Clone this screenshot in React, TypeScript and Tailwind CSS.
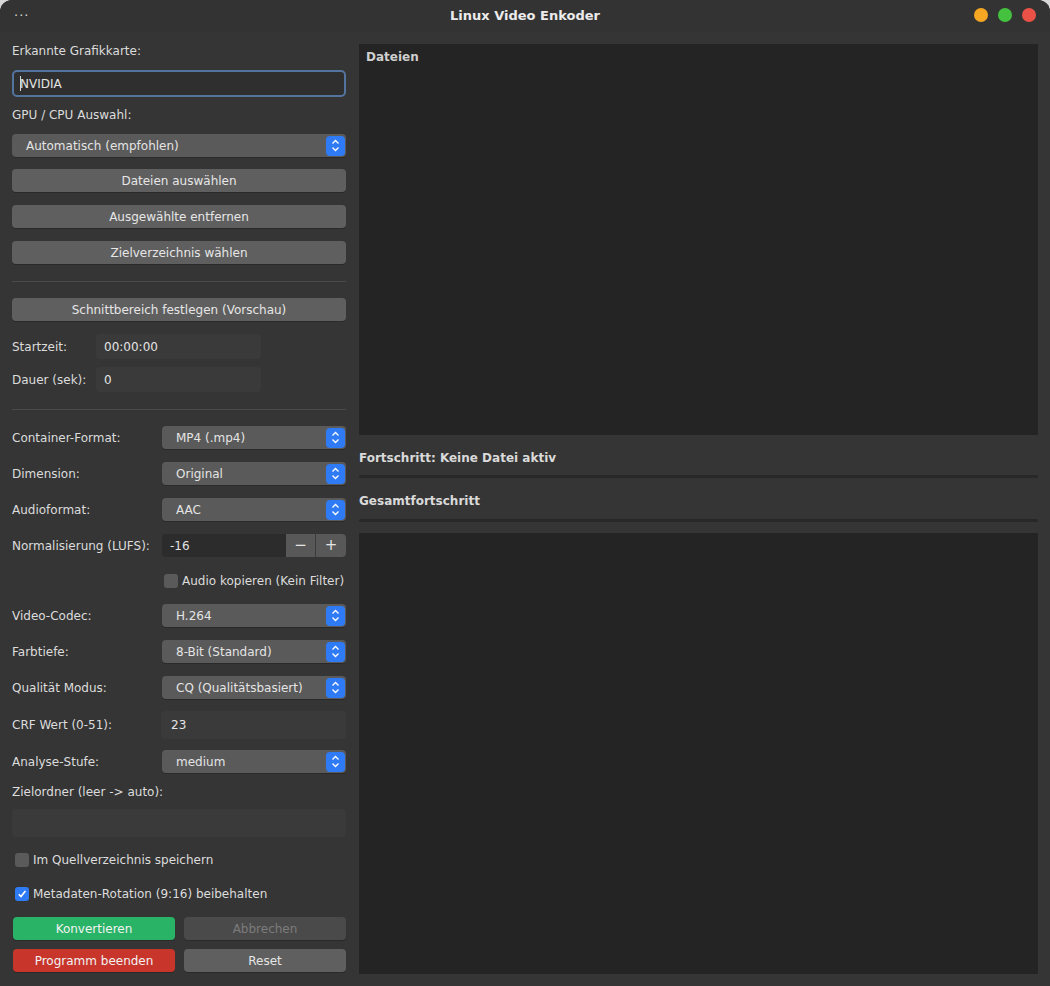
import type { ReactNode } from "react";

const font = { fontFamily: '"DejaVu Sans", "Liberation Sans", sans-serif' };

function Stepper() {
    return (
        <span className="flex h-[20px] w-[19px] items-center justify-center rounded-[4px] bg-[#2f7bf5]">
            <svg width="9" height="13" viewBox="0 0 9 13" fill="none">
                <path d="M1.5 4.5 L4.5 1.5 L7.5 4.5" stroke="white" strokeWidth="1.3" />
                <path d="M1.5 8.5 L4.5 11.5 L7.5 8.5" stroke="white" strokeWidth="1.3" />
            </svg>
        </span>
    );
}

function Select({ value, className = "" }: { value: string; className?: string }) {
    return (
        <div className={`flex h-[23px] items-center justify-between rounded-[4px] bg-[#5a5a5a] pl-[14px] pr-[1px] text-[#e4e4e4] shadow-[0_1px_0_#2a2a2a] ${className}`}>
            <span>{value}</span>
            <Stepper />
        </div>
    );
}

function Button({ children, className = "", tone = "default" }: { children: ReactNode; className?: string; tone?: "default" | "green" | "red" | "off" }) {
    const tones = {
        default: "bg-[#5f5f5f] text-[#e6e6e6]",
        green: "bg-[#29b366] text-[#f2f2f2]",
        red: "bg-[#c7352b] text-[#f2f2f2]",
        off: "bg-[#4a4a4a] text-[#7c7c7c]",
    };
    return (
        <div className={`flex h-[23px] items-center justify-center rounded-[4px] shadow-[0_1px_0_#2a2a2a] ${tones[tone]} ${className}`}>
            {children}
        </div>
    );
}

function SelectRow({ label, value, className = "" }: { label: string; value: string; className?: string }) {
    return (
        <div className={`flex h-[23px] items-center ${className}`}>
            <span className="w-[150px]">{label}</span>
            <Select value={value} className="w-[184px]" />
        </div>
    );
}

function Checkbox({ checked = false }: { checked?: boolean }) {
    return checked ? (
        <span className="flex h-[14px] w-[14px] items-center justify-center rounded-[3px] bg-[#2f7bf5]">
            <svg width="10" height="10" viewBox="0 0 10 10" fill="none">
                <path d="M1.8 5.3 L4 7.6 L8.4 2" stroke="white" strokeWidth="1.6" />
            </svg>
        </span>
    ) : (
        <span className="h-[14px] w-[14px] rounded-[3px] bg-[#5a5a5a]" />
    );
}

export default function App() {
    return (
        <div className="min-h-[986px] w-[1050px] bg-[#d8d8d8]" style={font}>
            <div className="flex h-[986px] w-[1050px] flex-col overflow-hidden rounded-t-[12px] bg-[#353535] text-[12px] text-[#dcdcdc]">
                {/* title bar */}
                <div className="relative flex h-[32px] shrink-0 items-center justify-center bg-[#333333]">
                    <span className="absolute left-[14px] top-[6px] text-[13px] tracking-[1px] text-[#d8d8d8]">···</span>
                    <span className="text-[13px] font-bold text-[#ececec]">Linux Video Enkoder</span>
                    <div className="absolute right-[14px] top-[8px] flex gap-[10px]">
                        <span className="h-[14px] w-[14px] rounded-full bg-[#f5a623]" />
                        <span className="h-[14px] w-[14px] rounded-full bg-[#44c23f]" />
                        <span className="h-[14px] w-[14px] rounded-full bg-[#eb5247]" />
                    </div>
                </div>

                <div className="flex flex-1 gap-[13px] pl-[12px] pr-[12px]">
                    {/* left column */}
                    <div className="flex w-[334px] shrink-0 flex-col">
                        <div className="mt-[11px] h-[16px] leading-[16px]">Erkannte Grafikkarte:</div>
                        <div className="mt-[11px] flex h-[27px] items-center rounded-[5px] border-2 border-[#52749f] bg-[#2f2f2f] pl-[6px] text-[#e4e4e4]">
                            <span className="mr-[-1px] h-[15px] w-px bg-[#d8d8d8]" />
                            NVIDIA
                        </div>
                        <div className="mt-[10px] h-[16px] leading-[16px]">GPU / CPU Auswahl:</div>
                        <Select value="Automatisch (empfohlen)" className="mt-[11px]" />
                        <Button className="mt-[12px]">Dateien auswählen</Button>
                        <Button className="mt-[13px]">Ausgewählte entfernen</Button>
                        <Button className="mt-[13px]">Zielverzeichnis wählen</Button>
                        <div className="mt-[17px] h-px bg-[#4a4a4a]" />
                        <Button className="mt-[16px]">Schnittbereich festlegen (Vorschau)</Button>
                        <div className="mt-[12px] flex h-[26px] items-center pt-[1px]">
                            <span className="w-[84px]">Startzeit:</span>
                            <div className="flex h-full w-[165px] items-center rounded-[4px] bg-[#3a3a3a] pl-[8px] text-[#e4e4e4]">00:00:00</div>
                        </div>
                        <div className="mt-[7px] flex h-[26px] items-center pt-[1px]">
                            <span className="w-[84px]">Dauer (sek):</span>
                            <div className="flex h-full w-[165px] items-center rounded-[4px] bg-[#3a3a3a] pl-[8px] text-[#e4e4e4]">0</div>
                        </div>
                        <div className="mt-[17px] h-px bg-[#4a4a4a]" />
                        <SelectRow label="Container-Format:" value="MP4 (.mp4)" className="mt-[16px]" />
                        <SelectRow label="Dimension:" value="Original" className="mt-[13px]" />
                        <SelectRow label="Audioformat:" value="AAC" className="mt-[13px]" />
                        <div className="mt-[13px] flex h-[23px] items-center">
                            <span className="w-[150px]">Normalisierung (LUFS):</span>
                            <div className="flex h-full w-[184px] overflow-hidden rounded-[4px] bg-[#2c2c2c]">
                                <span className="flex flex-1 items-center pl-[8px] text-[#e4e4e4]">-16</span>
                                <span className="flex w-[30px] items-center justify-center border-r border-[#3c3c3c] bg-[#585858] text-[15px] text-[#e4e4e4]">−</span>
                                <span className="flex w-[30px] items-center justify-center bg-[#585858] text-[15px] text-[#e4e4e4]">+</span>
                            </div>
                        </div>
                        <div className="mt-[17px] flex h-[14px] items-center gap-[4px] pl-[152px]">
                            <Checkbox />
                            <span>Audio kopieren (Kein Filter)</span>
                        </div>
                        <SelectRow label="Video-Codec:" value="H.264" className="mt-[16px]" />
                        <SelectRow label="Farbtiefe:" value="8-Bit (Standard)" className="mt-[13px]" />
                        <SelectRow label="Qualität Modus:" value="CQ (Qualitätsbasiert)" className="mt-[13px]" />
                        <div className="mt-[12px] flex h-[28px] items-center">
                            <span className="w-[149px]">CRF Wert (0-51):</span>
                            <div className="flex h-full w-[185px] items-center rounded-[4px] bg-[#3a3a3a] pl-[10px] text-[#e4e4e4]">23</div>
                        </div>
                        <SelectRow label="Analyse-Stufe:" value="medium" className="mt-[11px]" />
                        <div className="mt-[11px] h-[16px] leading-[16px]">Zielordner (leer -&gt; auto):</div>
                        <div className="mt-[9px] h-[28px] rounded-[4px] bg-[#3a3a3a]" />
                        <div className="mt-[16px] flex h-[14px] items-center gap-[4px] pl-[3px]">
                            <Checkbox />
                            <span>Im Quellverzeichnis speichern</span>
                        </div>
                        <div className="mt-[20px] flex h-[14px] items-center gap-[4px] pl-[3px]">
                            <Checkbox checked />
                            <span>Metadaten-Rotation (9:16) beibehalten</span>
                        </div>
                        <div className="mt-[16px] flex gap-[9px] pl-px">
                            <Button tone="green" className="w-[162px]">Konvertieren</Button>
                            <Button tone="off" className="w-[162px]">Abbrechen</Button>
                        </div>
                        <div className="mt-[9px] flex gap-[9px] pl-px">
                            <Button tone="red" className="w-[162px]">Programm beenden</Button>
                            <Button className="w-[162px]">Reset</Button>
                        </div>
                    </div>

                    {/* right column */}
                    <div className="flex flex-1 flex-col pb-[12px] pt-[12px]">
                        <div className="h-[391px] bg-[#242424] px-[7px] pt-[4px]">
                            <span className="font-bold text-[#cfcfcf]">Dateien</span>
                        </div>
                        <div className="mt-[15px] h-[16px] font-bold leading-[16px] text-[#dadada]">Fortschritt: Keine Datei aktiv</div>
                        <div className="mt-[9px] h-[3px] rounded-full bg-[#282828]" />
                        <div className="mt-[15px] h-[16px] font-bold leading-[16px] text-[#dadada]">Gesamtfortschritt</div>
                        <div className="mt-[10px] h-[3px] rounded-full bg-[#282828]" />
                        <div className="mt-[11px] flex-1 bg-[#242424]" />
                    </div>
                </div>
            </div>
        </div>
    );
}
